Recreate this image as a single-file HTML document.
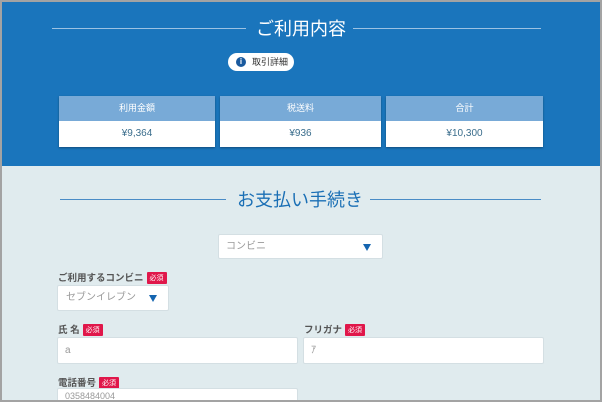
<!DOCTYPE html><html><head><meta charset="utf-8"><style>
*{margin:0;padding:0;box-sizing:border-box}
html{overflow:hidden;width:602px;height:402px}
body{width:602px;height:402px;overflow:hidden;background:#a3a3a3;font-family:"Liberation Sans","Noto Sans CJK JP",sans-serif;position:relative}
.blue{position:absolute;left:2px;top:2px;width:598px;height:164px;background:#1a75bc}
.light{position:absolute;left:2px;top:166px;width:598px;height:234px;background:#e0ebee}
.abs{position:absolute}
.line{position:absolute;height:1px}
.card{position:absolute;top:96px;height:51px;background:#fff;box-shadow:0 1px 2px rgba(0,0,0,.35)}
.card .h{height:25px;background:#78aad7;color:#fff;font-size:9px;text-align:center;line-height:25px}
.card .v{height:26px;color:#3a6d8c;font-size:10px;text-align:center;line-height:26px}
.box{position:absolute;background:#fff;border:1px solid #d4dfe3;border-radius:2px;font-size:10px;color:#999}
.lab{position:absolute;font-size:9.5px;color:#555;font-weight:bold}
.req{display:inline-block;background:#e0174a;color:#fff;font-size:7px;padding:1px 3px;margin-left:3px;vertical-align:1px;font-weight:normal;border-radius:1px}
.tri{position:absolute;width:0;height:0;border-left:4.5px solid transparent;border-right:4.5px solid transparent;border-top:7px solid #1565b0}
</style></head><body>
<div class="blue"></div><div class="light"></div>
<div class="line" style="left:52px;top:28px;width:194px;background:#9cc2e3"></div>
<div class="line" style="left:353px;top:28px;width:188px;background:#9cc2e3"></div>
<div class="abs" style="left:248px;top:15px;width:106px;text-align:center;color:#fff;font-size:18px">ご利用内容</div>
<div class="abs" style="left:228px;top:53px;width:66px;height:18px;background:#fff;border-radius:9px;font-size:9px;color:#333;line-height:18px">
<span style="position:absolute;left:8px;top:4px;width:10px;height:10px;border-radius:50%;background:#1a5a9e;color:#fff;font-size:8px;line-height:10px;text-align:center;font-weight:bold">i</span>
<span style="position:absolute;left:24px">取引詳細</span></div>
<div class="card" style="left:59px;width:156px"><div class="h">利用金額</div><div class="v">¥9,364</div></div>
<div class="card" style="left:220px;width:161px"><div class="h">税送料</div><div class="v">¥936</div></div>
<div class="card" style="left:386px;width:157px"><div class="h">合計</div><div class="v">¥10,300</div></div>
<div class="line" style="left:60px;top:199px;width:166px;background:#4a8cc6"></div>
<div class="line" style="left:370px;top:199px;width:171px;background:#4a8cc6"></div>
<div class="abs" style="left:228px;top:186px;width:144px;text-align:center;color:#1a6fb5;font-size:18px">お支払い手続き</div>
<div class="box" style="left:218px;top:234px;width:165px;height:25px;line-height:23px;padding-left:7px">コンビニ<div class="tri" style="left:144px;top:9px"></div></div>
<div class="lab" style="left:58px;top:270px">ご利用するコンビニ<span class="req">必須</span></div>
<div class="box" style="left:57px;top:285px;width:112px;height:26px;line-height:24px;padding-left:8px">セブンイレブン<div class="tri" style="left:91px;top:9px"></div></div>
<div class="lab" style="left:58px;top:322px">氏 名<span class="req">必須</span></div>
<div class="lab" style="left:304px;top:322px">フリガナ<span class="req">必須</span></div>
<div class="box" style="left:57px;top:337px;width:241px;height:27px;line-height:25px;padding-left:7px">a</div>
<div class="box" style="left:303px;top:337px;width:241px;height:27px;line-height:25px;padding-left:7px">ｱ</div>
<div class="lab" style="left:58px;top:375px">電話番号<span class="req">必須</span></div>
<div class="box" style="left:57px;top:388px;width:241px;height:12px;border-bottom:none;border-radius:2px 2px 0 0;line-height:14px;padding-left:7px;font-size:9px;overflow:hidden">0358484004</div>
</body></html>
